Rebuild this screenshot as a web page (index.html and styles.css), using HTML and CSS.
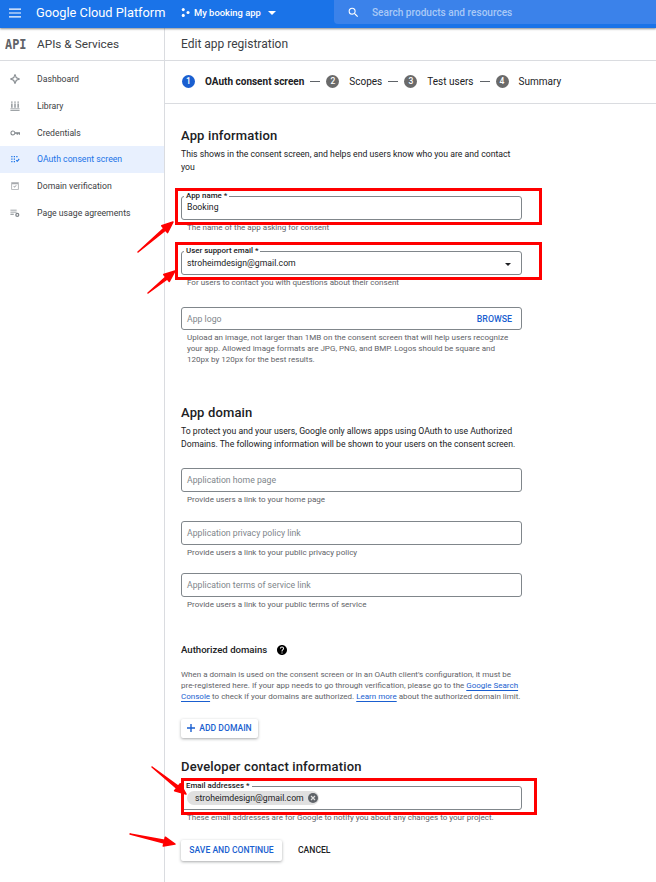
FILE: index.html
```html
<!DOCTYPE html>
<html lang="en">
<head>
    <meta charset="UTF-8">
    <meta name="viewport" content="width=device-width, initial-scale=1.0">
    <title>Edit app registration</title>
    <link rel="stylesheet" href="styles.css">
</head>
<body>
    <div class="topbar">
        <svg class="menu-icon" viewBox="0 0 12 10"><path d="M0 0.5h12v1.2H0zM0 4.4h12v1.2H0zM0 8.3h12v1.2H0z"/></svg>
        <span class="brand">Google Cloud Platform</span>
        <svg class="project-icon" viewBox="0 0 10 10"><circle cx="2.5" cy="1.8" r="1.7"/><circle cx="2.5" cy="8.2" r="1.7"/><circle cx="7.8" cy="5" r="1.7"/></svg>
        <span class="project-name">My booking app</span>
        <span class="project-caret"></span>
        <div class="search">
            <svg class="search-icon" viewBox="0 0 24 24"><path d="M15.5 14h-.79l-.28-.27A6.47 6.47 0 0 0 16 9.5 6.5 6.5 0 1 0 9.5 16c1.61 0 3.09-.59 4.23-1.57l.27.28v.79l5 4.99L20.49 19l-4.99-5zm-6 0C7.01 14 5 11.99 5 9.5S7.01 5 9.5 5 14 7.01 14 9.5 11.99 14 9.5 14z"/></svg>
            <span>Search products and resources</span>
        </div>
    </div>

    <div class="layout">
        <div class="sidebar">
            <div class="sidebar-head">
                <span class="api-mark">API</span>
                <span class="sidebar-title">APIs &amp; Services</span>
            </div>
            <ul class="nav">
                <li class="nav-item">
                    <svg viewBox="0 0 24 24"><path d="M12 0l3 3-3 3-3-3zM12 18l3 3-3 3-3-3zM3 9l3 3-3 3-3-3zM21 9l3 3-3 3-3-3z"/><circle cx="12" cy="12" r="5.500" fill="none" stroke="#80868b" stroke-width="2.500"/></svg>
                    Dashboard
                </li>
                <li class="nav-item">
                    <svg viewBox="0 0 24 24"><path d="M3 1h3v3H3zM10.500 1h3v3h-3zM18 1h3v3h-3zM3 6h3v10H3zM10.500 6h3v10h-3zM18 6h3v10h-3zM1 18h22v2H1zM1 22h22v2H1z"/></svg>
                    Library
                </li>
                <li class="nav-item">
                    <svg viewBox="0 0 24 24"><path d="M12.650 10A6 6 0 0 0 7 6a6 6 0 0 0 0 12 6 6 0 0 0 5.650-4H16v2h3v-2h2v2h3v-6H12.650zM7 15.500a3.500 3.500 0 1 1 0-7 3.500 3.500 0 0 1 0 7z"/></svg>
                    Credentials
                </li>
                <li class="nav-item nav-item-active">
                    <svg viewBox="0 0 24 24"><path d="M3 5h3v3H3zM9 5h3v3H9zM15 5h3v3h-3zM3 11h3v3H3zM9 11h3v3H9zM3 17h3v3H3zM9 17h3v3H9zM14 16l2-2 1.500 1.500L21 11l2 2-5.500 6z"/></svg>
                    OAuth consent screen
                </li>
                <li class="nav-item nav-item-light">
                    <svg viewBox="0 0 24 24"><path d="M3 3h18v18H3zm2 5v11h14V8zM8 13l1.500-1.500 1.500 1.500 3.500-3.500 1.500 1.500-5 5z" fill-rule="evenodd"/></svg>
                    Domain verification
                </li>
                <li class="nav-item">
                    <svg viewBox="0 0 24 24"><path d="M1 4h15v2H1zM1 9h15v2H1zM1 14h8v2H1z"/><circle cx="17.500" cy="16.500" r="5"/><circle cx="17.500" cy="16.500" r="2" fill="#fff"/></svg>
                    Page usage agreements
                </li>
            </ul>
        </div>

        <div class="main">
            <div class="main-head">Edit app registration</div>
            <div class="stepper">
                <span class="step-num step-num-active">1</span>
                <span class="step-label step-label-active">OAuth consent screen</span>
                <span class="step-dash"></span>
                <span class="step-num">2</span>
                <span class="step-label">Scopes</span>
                <span class="step-dash"></span>
                <span class="step-num">3</span>
                <span class="step-label">Test users</span>
                <span class="step-dash"></span>
                <span class="step-num">4</span>
                <span class="step-label">Summary</span>
            </div>

            <div class="form">
                <h2 class="section-title">App information</h2>
                <p class="section-text">This shows in the consent screen, and helps end users know who you are and contact you</p>

                <div class="field field-first">
                    <span class="field-label">App name *</span>
                    <span class="field-value">Booking</span>
                </div>
                <p class="hint">The name of the app asking for consent</p>

                <div class="field field-second">
                    <span class="field-label">User support email *</span>
                    <span class="field-value">stroheimdesign@gmail.com</span>
                    <span class="select-caret"></span>
                </div>
                <p class="hint">For users to contact you with questions about their consent</p>

                <div class="field field-logo">
                    <span class="field-holder">App logo</span>
                    <span class="browse">BROWSE</span>
                </div>
                <p class="hint hint-long">Upload an image, not larger than 1MB on the consent screen that will help users recognize your app. Allowed image formats are JPG, PNG, and BMP. Logos should be square and 120px by 120px for the best results.</p>

                <h2 class="section-title section-domain">App domain</h2>
                <p class="section-text">To protect you and your users, Google only allows apps using OAuth to use Authorized Domains. The following information will be shown to your users on the consent screen.</p>

                <div class="field field-home">
                    <span class="field-holder">Application home page</span>
                </div>
                <p class="hint">Provide users a link to your home page</p>

                <div class="field field-link">
                    <span class="field-holder">Application privacy policy link</span>
                </div>
                <p class="hint">Provide users a link to your public privacy policy</p>

                <div class="field field-link">
                    <span class="field-holder">Application terms of service link</span>
                </div>
                <p class="hint">Provide users a link to your public terms of service</p>

                <div class="auth-head">
                    <span>Authorized domains</span>
                    <svg viewBox="0 0 24 24"><path d="M12 2C6.480 2 2 6.480 2 12s4.480 10 10 10 10-4.480 10-10S17.520 2 12 2zm1 17h-2v-2h2v2zm2.070-7.750l-.9.920C13.450 12.900 13 13.500 13 15h-2v-.5c0-1.100.45-2.100 1.170-2.830l1.240-1.260c.37-.36.59-.86.59-1.410 0-1.100-.9-2-2-2s-2 .9-2 2H8c0-2.210 1.790-4 4-4s4 1.790 4 4c0 .88-.36 1.680-.93 2.250z"/></svg>
                </div>
                <p class="auth-text">When a domain is used on the consent screen or in an OAuth client's configuration, it must be pre-registered here. If your app needs to go through verification, please go to the <a href="#">Google Search</a> <a href="#">Console</a> to check if your domains are authorized. <a href="#">Learn more</a> about the authorized domain limit.</p>

                <button class="raised-button add-domain">
                    <svg viewBox="0 0 8 8"><path d="M3.300 0h1.400v3.300H8v1.400H4.700V8H3.300V4.700H0V3.300h3.300z"/></svg>
                    ADD DOMAIN
                </button>

                <h2 class="section-title section-developer">Developer contact information</h2>
                <div class="field field-emails">
                    <span class="field-label">Email addresses *</span>
                    <span class="chip">
                        stroheimdesign@gmail.com
                        <svg viewBox="0 0 10 10"><circle cx="5" cy="5" r="5"/><path d="M3 3l4 4M7 3l-4 4" stroke="#e0e0e0" stroke-width="1.200"/></svg>
                    </span>
                </div>
                <p class="hint">These email addresses are for Google to notify you about any changes to your project.</p>

                <div class="actions">
                    <button class="raised-button save">SAVE AND CONTINUE</button>
                    <button class="text-button">CANCEL</button>
                </div>
            </div>
        </div>
    </div>

    <!-- red annotations drawn on top of the screenshot -->
    <div class="mark mark-name"></div>
    <div class="mark mark-support"></div>
    <div class="mark mark-emails"></div>
    <svg class="arrows" viewBox="0 0 656 882">
        <path d="M138 252L163.800 228.200 161.700 225.800 173 222 167.500 232.600 165.400 230.200z"/>
        <path d="M148 293L165.700 277 163.700 274.500 175 271 169.300 281.500 167.300 279z"/>
        <path d="M152 767L178.200 786.200 180.200 783.700 186 794 174.600 790.700 176.600 788.200z"/>
        <path d="M130 834L164.600 840.300 165.300 837.200 175 844 163.300 846 164 842.900z"/>
    </svg>
</body>
</html>
```

FILE: styles.css
```css
* {
    box-sizing: border-box;
}
html, body {
    height: 100%;
}
body {
    margin: 0;
    font-family: Roboto, "Liberation Sans", sans-serif;
    font-size: 9.4px;
    color: #202124;
    background: #fff;
    overflow: hidden;
    position: relative;
}
.topbar {
    display: flex;
    align-items: center;
    height: 28px;
    padding-bottom: 3px;
    background: #1a73e8;
    color: #fff;
    box-shadow: 0 1px 2px rgba(60, 64, 67, 0.6);
    position: relative;
}
.menu-icon {
    width: 12px;
    height: 10px;
    margin-left: 9px;
    fill: #fff;
}
.brand {
    margin-left: 15px;
    font-size: 12.8px;
    white-space: nowrap;
    width: 144px;
}
.project-icon {
    width: 9px;
    height: 9px;
    fill: #fff;
    margin-left: 1px;
}
.project-name {
    margin-left: 4px;
    font-size: 9.4px;
    font-weight: 500;
    white-space: nowrap;
    width: 74px;
}
.project-caret {
    width: 0;
    height: 0;
    border-left: 4px solid transparent;
    border-right: 4px solid transparent;
    border-top: 4px solid #fff;
}
.search {
    display: flex;
    align-items: center;
    margin-left: 58px;
    flex: 1;
    height: 24px;
    align-self: flex-start;
    background: #3b82ea;
    border-radius: 0 0 0 4px;
    color: #a9c9f7;
    font-size: 10.1px;
    font-weight: 500;
}
.search-icon {
    width: 13px;
    height: 13px;
    margin-left: 12.5px;
    margin-right: 12.5px;
    fill: #fff;
}
.layout {
    display: flex;
    height: 854px;
}
.sidebar {
    width: 165px;
    flex: none;
    border-right: 1px solid #dadce0;
}
.sidebar-head {
    display: flex;
    align-items: center;
    height: 33px;
    border-bottom: 1px solid #dadce0;
}
.api-mark {
    width: 37px;
    padding-left: 5px;
    font-family: "DejaVu Sans Mono", "Liberation Mono", monospace;
    font-size: 14px;
    font-weight: 700;
    color: #5f6368;
    transform: scaleX(0.85);
    transform-origin: 5px 50%;
}
.sidebar-title {
    font-size: 11.8px;
    color: #3c4043;
}
.nav {
    list-style: none;
    margin: 5px 0 0;
    padding: 0;
}
.nav-item {
    display: flex;
    align-items: center;
    height: 26.7px;
    padding-left: 10px;
    font-size: 8.7px;
    color: #3c4043;
    white-space: nowrap;
}
.nav-item svg {
    width: 10px;
    height: 10px;
    margin-right: 17px;
    fill: #80868b;
}
.nav-item-active {
    background: #e8f0fe;
    color: #1a73e8;
}
.nav-item-active svg {
    fill: #1a73e8;
}
.nav-item-light svg {
    fill: #a6a9ad;
}
.main {
    flex: 1;
}
.main-head {
    display: flex;
    align-items: center;
    height: 33px;
    padding-left: 16px;
    font-size: 12px;
    color: #3c4043;
    border-bottom: 1px solid #dadce0;
}
.stepper {
    display: flex;
    align-items: center;
    height: 43px;
    padding-left: 17px;
    padding-bottom: 1px;
    border-bottom: 1px solid #dadce0;
    font-size: 10px;
}
.step-num {
    width: 13px;
    height: 13px;
    border-radius: 50%;
    background: #6a6a6a;
    color: #fff;
    font-size: 8.5px;
    font-weight: 500;
    text-align: center;
    line-height: 13px;
}
.step-num-active {
    background: #1a5fd0;
}
.step-label {
    margin-left: 10px;
    white-space: nowrap;
}
.step-label-active {
    font-weight: 700;
}
.step-dash {
    width: 10px;
    height: 1px;
    margin: 0 6px;
    background: #5f6368;
}
.form {
    width: 357px;
    padding: 24px 0 0 16px;
}
.section-title {
    margin: 0;
    font-size: 13px;
    line-height: 15px;
    font-weight: 500;
    letter-spacing: 0.15px;
}
.section-text {
    margin: 5px 0 0;
    font-size: 8.7px;
    line-height: 13px;
}
.field {
    position: relative;
    display: flex;
    align-items: center;
    height: 24px;
    padding: 0 5px;
    border: 1px solid #80868b;
    border-radius: 3px;
}
.field-first {
    margin-top: 22px;
    padding-bottom: 3px;
}
.field-second {
    margin-top: 18px;
}
.field-logo {
    margin-top: 19px;
    height: 23px;
    justify-content: space-between;
}
.field-home {
    margin-top: 17px;
}
.field-link {
    margin-top: 15.7px;
}
.field-emails {
    margin-top: 11.5px;
    padding-left: 5px;
}
.field-label {
    position: absolute;
    top: -5px;
    left: 2px;
    padding: 0 2px;
    background: #fff;
    font-size: 7.9px;
    line-height: 8px;
    font-weight: 500;
}
.field-value {
    font-size: 8.7px;
}
.field-holder {
    font-size: 8.7px;
    color: #80868b;
}
.browse {
    font-size: 8.8px;
    font-weight: 500;
    color: #1a5fd0;
    padding-right: 4px;
}
.select-caret {
    position: absolute;
    right: 10px;
    top: 11px;
    width: 0;
    height: 0;
    border-left: 3px solid transparent;
    border-right: 3px solid transparent;
    border-top: 3px solid #202124;
}
.hint {
    margin: 2px 0 0;
    padding-left: 6px;
    font-size: 8.05px;
    line-height: 11px;
    color: #5f6368;
    white-space: nowrap;
}
.hint-long {
    white-space: normal;
    width: 332px;
}
.section-domain {
    margin-top: 40px;
}
.auth-head {
    display: flex;
    align-items: center;
    gap: 9px;
    margin-top: 33.6px;
    font-size: 9.6px;
    font-weight: 500;
}
.auth-head svg {
    width: 12px;
    height: 12px;
    fill: #000;
}
.auth-text {
    margin: 14.4px 0 0;
    font-size: 8px;
    line-height: 10.6px;
    color: #5f6368;
}
.auth-text a {
    color: #1a5fd0;
    text-decoration: underline;
    text-underline-offset: 1.5px;
}
.raised-button {
    border: none;
    border-radius: 2px;
    background: #fff;
    color: #1a5fd0;
    font-family: inherit;
    font-weight: 500;
    font-size: 8.6px;
    box-shadow: 0 1px 3px rgba(60, 64, 67, 0.45);
}
.add-domain {
    display: flex;
    align-items: center;
    justify-content: center;
    gap: 4px;
    height: 19px;
    width: 77px;
    margin-top: 16.8px;
    padding: 0;
}
.add-domain svg {
    width: 8px;
    height: 8px;
    fill: #1a5fd0;
}
.section-developer {
    margin-top: 21.5px;
}
.chip {
    display: inline-flex;
    align-items: center;
    gap: 4px;
    height: 14px;
    padding: 0 1px 0 8px;
    border-radius: 7px;
    background: #e0e0e0;
    font-size: 8.7px;
    white-space: nowrap;
}
.chip svg {
    width: 10px;
    height: 10px;
    fill: #5f6368;
}
.actions {
    display: flex;
    align-items: center;
    gap: 16px;
    margin-top: 17px;
}
.save {
    height: 21px;
    width: 101px;
    padding: 0;
}
.text-button {
    border: none;
    padding: 0;
    background: none;
    font-family: inherit;
    font-size: 8.6px;
    font-weight: 500;
    color: #202124;
}
.mark {
    position: absolute;
    border: 3px solid #f00;
}
.mark-name {
    left: 175px;
    top: 188px;
    width: 367px;
    height: 37px;
}
.mark-support {
    left: 175px;
    top: 242px;
    width: 367px;
    height: 38px;
}
.mark-emails {
    left: 181px;
    top: 778px;
    width: 356px;
    height: 37px;
}
.arrows {
    position: absolute;
    left: 0;
    top: 0;
    width: 656px;
    height: 882px;
    fill: #f00;
    stroke: #f00;
    stroke-width: 1.5;
    stroke-linejoin: round;
}
```
